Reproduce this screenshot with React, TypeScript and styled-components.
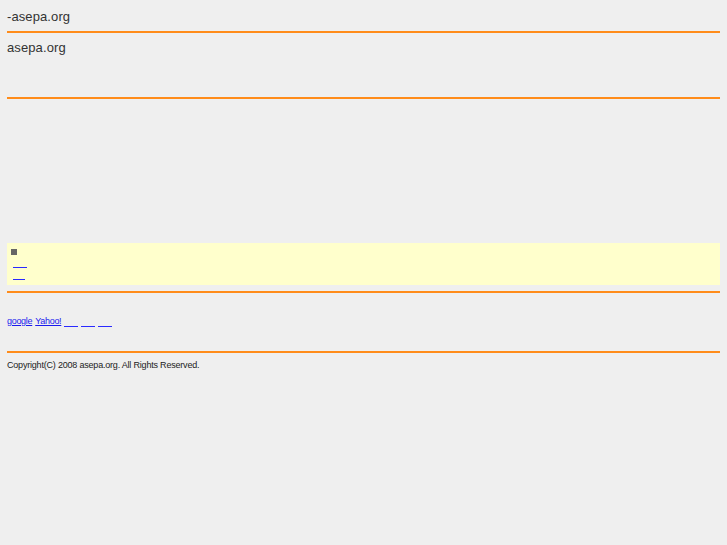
import React from "react";
import styled, { createGlobalStyle } from "styled-components";

const GlobalStyle = createGlobalStyle`
  html, body {
    margin: 0;
    padding: 0;
    background: #efefef;
  }
  body {
    font-family: "Liberation Sans", Arial, sans-serif;
    color: #333;
  }
`;

const Page = styled("div")`
  padding: 0 7px;
  width: 713px;
`;

const Title = styled("h1")`
  margin: 0;
  padding: 9px 0 0;
  height: 23px;
  font-size: 13px;
  font-weight: normal;
  letter-spacing: 0.1px;
  line-height: 15px;
  box-sizing: border-box;
  height: 31px;
`;

const Rule = styled("div")`
  height: 2px;
  background: #ff8c1a;
`;

const Header = styled("div")`
  height: 64px;
  padding-top: 7px;
  font-size: 13px;
  letter-spacing: 0.1px;
  line-height: 15px;
  box-sizing: border-box;
`;

const Spacer = styled("div")`
  height: 144px;
`;

const Notice = styled("div")`
  background: #ffffcc;
  height: 42px;
  padding: 5px 0 0 4px;
  box-sizing: border-box;
  font-size: 9px;
  line-height: 12px;
`;

const Square = styled("div")`
  width: 6px;
  height: 6px;
  margin: 1px 0 1px;
  background: #666;
`;

const NoticeLink = styled("a")<{ $w: number }>`
  display: block;
  width: ${(p) => p.$w}px;
  height: 12px;
  margin-left: 2px;
  border-bottom: 1px solid #2a2aff;
  box-sizing: border-box;
`;

const Gap = styled("div")<{ $h: number }>`
  height: ${(p) => p.$h}px;
`;

const Links = styled("div")`
  display: flex;
  gap: 3px;
  font-size: 9px;
  line-height: 11px;
  letter-spacing: -0.3px;
  a {
    color: #1a1aee;
    text-decoration: underline;
  }
`;

const Blank = styled("a")<{ $w: number }>`
  display: inline-block;
  width: ${(p) => p.$w}px;
  height: 10px;
  border-bottom: 1px solid #2a2aff;
`;

const Copyright = styled("div")`
  padding-top: 7px;
  font-size: 9px;
  line-height: 11px;
  color: #222;
  letter-spacing: -0.2px;
`;

export default function App() {
  return (
    <>
      <GlobalStyle />
      <Page>
        <Title>-asepa.org</Title>
        <Rule />
        <Header>asepa.org</Header>
        <Rule />
        <Spacer />
        <Notice>
          <Square />
          <NoticeLink href="#" $w={14} />
          <NoticeLink href="#" $w={12} />
        </Notice>
        <Gap $h={6} />
        <Rule />
        <Gap $h={23} />
        <Links>
          <a href="#">google</a>
          <a href="#">Yahoo!</a>
          <Blank href="#" $w={14} />
          <Blank href="#" $w={14} />
          <Blank href="#" $w={14} />
        </Links>
        <Gap $h={24} />
        <Rule />
        <Copyright>Copyright(C) 2008 asepa.org. All Rights Reserved.</Copyright>
      </Page>
    </>
  );
}
